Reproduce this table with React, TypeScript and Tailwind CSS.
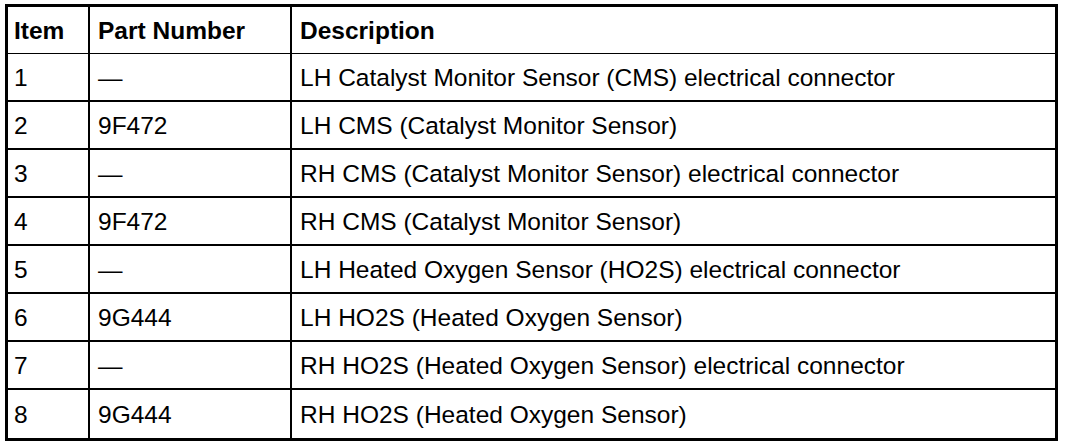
const rows = [
  ["1", "—", "LH Catalyst Monitor Sensor (CMS) electrical connector"],
  ["2", "9F472", "LH CMS (Catalyst Monitor Sensor)"],
  ["3", "—", "RH CMS (Catalyst Monitor Sensor) electrical connector"],
  ["4", "9F472", "RH CMS (Catalyst Monitor Sensor)"],
  ["5", "—", "LH Heated Oxygen Sensor (HO2S) electrical connector"],
  ["6", "9G444", "LH HO2S (Heated Oxygen Sensor)"],
  ["7", "—", "RH HO2S (Heated Oxygen Sensor) electrical connector"],
  ["8", "9G444", "RH HO2S (Heated Oxygen Sensor)"],
];

export default function App() {
  return (
    <div className="w-[1072px] h-[444px] bg-white pl-[5px] pt-[4px] text-black font-['Liberation_Sans',Arial,sans-serif] text-[24.5px] leading-none">
      <div className="w-[1053px] border-[3px] border-black">
        {/* header */}
        <div className="flex h-[47px] border-b border-black font-bold">
          <div className="w-[82px] shrink-0 border-r-2 border-black flex items-center pl-[6px] pt-[3px]">Item</div>
          <div className="w-[202px] shrink-0 border-r-2 border-black flex items-center pl-[8px] pt-[3px]">Part Number</div>
          <div className="flex-1 flex items-center pl-[8px] pt-[3px]">Description</div>
        </div>
        {rows.map((r, i) => (
          <div
            key={r[0]}
            className={`flex h-[48px] ${i < rows.length - 1 ? "border-b-2 border-black" : ""}`}
          >
            <div className="w-[82px] shrink-0 border-r-2 border-black flex items-center pl-[6px] pt-[3px]">{r[0]}</div>
            <div className="w-[202px] shrink-0 border-r-2 border-black flex items-center pl-[8px] pt-[3px]">{r[1]}</div>
            <div className="flex-1 flex items-center pl-[8px] pt-[3px]">{r[2]}</div>
          </div>
        ))}
      </div>
    </div>
  );
}
